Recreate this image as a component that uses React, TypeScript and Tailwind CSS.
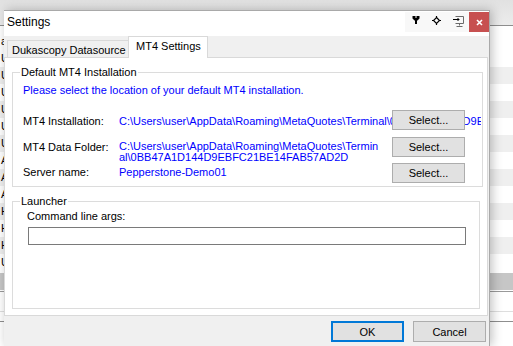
import React from "react";

const rowLetters = ["a", "U", "U", "U", "U", "U", "U", "A", "A", "A", "H", "H", "H", "U"];

const longPath = "C:\\Users\\user\\AppData\\Roaming\\MetaQuotes\\Terminal\\0BB47A1D144D9EBFC21BE14FAB57AD2D";

function SelectButton() {
  return (
    <button className="w-[73px] h-[20px] bg-[#e1e1e1] border border-[#adadad] text-black text-[11px] leading-[13px] pt-[1px]">
      Select...
    </button>
  );
}

function PinIcon() {
  return (
    <svg width="8" height="8" viewBox="0 0 8 8">
      <path d="M0.5 0h3v2h1V0h3v2.5L5.5 4.5H5V8H3V4.5H2.5L0.5 2.5z" fill="#000" />
    </svg>
  );
}

function TargetIcon() {
  return (
    <svg width="9" height="9" viewBox="0 0 9 9" fill="none" stroke="#000">
      <path d="M4.5 1.5L7.5 4.5L4.5 7.5L1.5 4.5Z" strokeWidth="1.2" />
      <path d="M4.5 0v1.6M4.5 7.4V9M0 4.5h1.6M7.4 4.5H9" strokeWidth="1.2" />
    </svg>
  );
}

function MonitorIcon() {
  return (
    <svg width="11" height="11" viewBox="0 0 11 11" fill="none" stroke="#6b6b6b">
      <path d="M2.5 0.5h8v7h-8" />
      <path d="M0 3.5h6M4.5 2l1.5 1.5L4.5 5" stroke="#000" />
      <path d="M6.5 7.5v2M3.5 10.5h6" />
    </svg>
  );
}

function CloseIcon() {
  return (
    <svg width="7" height="7" viewBox="0 0 7 7" stroke="#fff" strokeWidth="1.6">
      <path d="M1 1l5 5M6 1L1 6" />
    </svg>
  );
}

export default function App() {
  return (
    <div className="relative w-[513px] h-[346px] overflow-hidden bg-white font-['Liberation_Sans',Arial,sans-serif] text-black">
      {/* window behind the dialog */}
      <div className="flex flex-col">
        <div className="h-[26px] bg-gradient-to-b from-[#e1e1e1] to-[#ececec] border-b border-[#8e8e8e]" />
        <div className="h-[7px]" />
        {rowLetters.map((l, i) => (
          <div
            key={i}
            className={`h-[17px] pl-[1px] text-[11px] leading-[17px] ${i > 0 && i % 2 === 0 ? "bg-[#efefef]" : "bg-white"}`}
          >
            {l}
          </div>
        ))}
        <div className="h-[2px]" />
        <div className="h-[17px] bg-[#c6c6c6]" />
        <div className="h-[2px] border-b border-[#9a9a9a]" />
        <div className="h-[20px] border-b border-[#dedede]" />
        <div className="h-[10px] border-b border-[#8e8e8e]" />
      </div>

      {/* Settings dialog */}
      <div className="absolute left-[4px] top-[10px] w-[486px] h-[336px] flex flex-col bg-[#f0f0f0] border-t border-r border-[#a9a9a9] shadow-[2px_0_10px_rgba(0,0,0,0.25)]">
        <div className="h-[25px] bg-white flex items-start">
          <span className="pl-[3px] pt-[4px] text-[12px] leading-[15px]">Settings</span>
          <div className="ml-auto flex pt-[1px]">
            <div className="w-[21px] h-[20px] bg-[#f8f8f8] flex items-center justify-center pb-[4px]">
              <PinIcon />
            </div>
            <div className="w-[21px] h-[20px] bg-[#f8f8f8] flex items-center justify-center pb-[3px]">
              <TargetIcon />
            </div>
            <div className="w-[22px] h-[20px] bg-[#f8f8f8] flex items-center justify-center pb-[2px]">
              <MonitorIcon />
            </div>
            <div className="w-[20px] h-[20px] bg-[#c75050] flex items-center justify-center">
              <CloseIcon />
            </div>
          </div>
        </div>

        {/* tabs */}
        <div className="h-[21px] flex items-end pl-[3px] text-[11px] leading-[13px]">
          <div className="w-[122px] h-[17px] border border-b-0 border-[#d9d9d9] bg-[#f0f0f0] pl-[4px] pt-[3px]">
            Dukascopy Datasource
          </div>
          <div className="relative z-10 -ml-px w-[80px] h-[22px] -mb-px border border-b-0 border-[#d9d9d9] bg-white pl-[7px] pt-[3px]">
            MT4 Settings
          </div>
        </div>

        {/* tab page */}
        <div className="w-[484px] h-[259px] bg-white border border-[#d9d9d9] text-[11px] leading-[13px]">
          <fieldset className="ml-[7px] mt-[7px] w-[471px] border border-[#dcdcdc] pl-[10px] pb-[3px]">
            <legend className="-ml-[3px] px-[1px] leading-[14px]">Default MT4 Installation</legend>
            <div className="mt-[5px] text-[#0000ff] whitespace-nowrap">
              Please select the location of your default MT4 installation.
            </div>

            <div className="relative mt-[13px] h-[20px] flex">
              <div className="w-[96px] pt-[5px] shrink-0">MT4 Installation:</div>
              <div className="pt-[5px] text-[#0000ff] whitespace-nowrap overflow-hidden w-[362px]">{longPath}</div>
              <div className="absolute left-[369px] top-0">
                <SelectButton />
              </div>
            </div>

            <div className="mt-[7px] flex">
              <div className="w-[96px] pt-[4px] shrink-0">MT4 Data Folder:</div>
              <div className="w-[273px] pt-[4px] leading-[11px] text-[#0000ff] whitespace-nowrap">
                <div>C:\Users\user\AppData\Roaming\MetaQuotes\Termin</div>
                <div>al\0BB47A1D144D9EBFC21BE14FAB57AD2D</div>
              </div>
              <SelectButton />
            </div>

            <div className="flex">
              <div className="w-[96px] pt-[3px] shrink-0">Server name:</div>
              <div className="w-[273px] pt-[3px] text-[#0000ff]">Pepperstone-Demo01</div>
              <SelectButton />
            </div>
          </fieldset>

          <fieldset className="ml-[7px] mt-[7px] w-[468px] h-[115px] border border-[#dcdcdc] pl-[14px]">
            <legend className="-ml-[7px] px-[1px] leading-[14px]">Launcher</legend>
            <div className="mt-[2px]">Command line args:</div>
            <div className="mt-[4px] ml-[1px] w-[438px] h-[18px] border border-[#7a7a7a] bg-white" />
          </fieldset>
        </div>

        {/* footer buttons */}
        <div className="flex justify-end gap-[9px] pt-[5px] pr-[3px] text-[11px] leading-[13px]">
          <button className="w-[73px] h-[21px] bg-[#e1e1e1] border-2 border-[#0078d7] pt-[1px]">OK</button>
          <button className="w-[73px] h-[21px] bg-[#e1e1e1] border border-[#adadad] pt-[1px]">Cancel</button>
        </div>
      </div>
    </div>
  );
}
